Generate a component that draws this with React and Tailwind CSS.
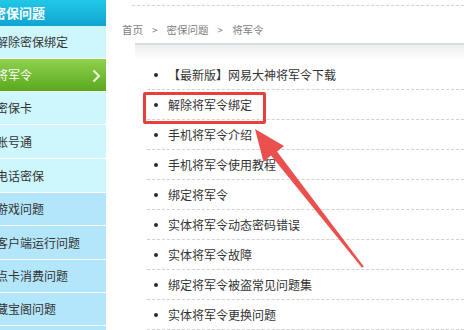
import React from "react";

const FONT = { fontFamily: '"Noto Sans CJK SC", "Noto Sans", sans-serif' };

const side = [
  { t: "解除密保绑定", c: "h-[33px] bg-[#cdf6fd]" },
  { t: "将军令", c: "h-[33px] bg-gradient-to-b from-[#8fd24c] to-[#5aa81c] text-white", active: true },
  { t: "密保卡", c: "h-[33px] bg-[#cdf6fd]" },
  { t: "账号通", c: "h-[34px] bg-[#cdf6fd]" },
  { t: "电话密保", c: "h-[34px] bg-[#cdf6fd]" },
  { t: "游戏问题", c: "h-[33px] bg-[#b3e6fa]" },
  { t: "客户端运行问题", c: "h-[34px] bg-[#b3e6fa]" },
  { t: "点卡消费问题", c: "h-[33px] bg-[#b3e6fa]" },
  { t: "藏宝阁问题", c: "h-[33px] bg-[#b3e6fa]" },
];

const items = [
  "【最新版】网易大神将军令下载",
  "解除将军令绑定",
  "手机将军令介绍",
  "手机将军令使用教程",
  "绑定将军令",
  "实体将军令动态密码错误",
  "实体将军令故障",
  "绑定将军令被盗常见问题集",
  "实体将军令更换问题",
];

export default function App() {
  return (
    <div className="relative flex h-[330px] w-[464px] overflow-hidden bg-white" style={FONT}>
      {/* Sidebar */}
      <div className="flex w-[106px] shrink-0 flex-col overflow-hidden bg-[#b3e6fa]">
        <div className="flex h-[26px] shrink-0 items-center bg-gradient-to-b from-[#22c8e6] to-[#0fa4d2]">
          <span className="ml-[-7px] whitespace-nowrap text-[13px] font-bold text-white">密保问题</span>
        </div>
        {side.map((s) => (
          <div
            key={s.t}
            className={`relative flex shrink-0 items-center border-b border-white ${s.c}`}
          >
            <span className={`ml-[-4px] whitespace-nowrap text-[12px] ${s.active ? "text-white" : "text-[#333333]"}`}>
              {s.t}
            </span>
            {s.active && (
              <svg className="absolute right-[5px] top-[10px]" width="9" height="14" viewBox="0 0 9 14">
                <polyline points="1.5,1.5 7,7 1.5,12.5" fill="none" stroke="#effbdc" strokeWidth="2" />
              </svg>
            )}
          </div>
        ))}
        <div className="flex-1 bg-[#b3e6fa]" />
      </div>

      {/* Content */}
      <div className="flex flex-1 flex-col">
        <div className="ml-[26px] mt-[5px] border-t border-dashed border-[#d4d4d4]" />
        <div className="flex h-[40px] items-center gap-[9px] pl-[16px] pt-[10px] text-[10.5px] text-[#808080]">
          <span>首页</span>
          <span className="text-[10px]">&gt;</span>
          <span>密保问题</span>
          <span className="text-[10px]">&gt;</span>
          <span>将军令</span>
        </div>
        <div className="ml-[29px] border-t-2 border-[#d9dde0]" />
        <div className="ml-[29px] h-[16px] bg-gradient-to-b from-[#eceff1] to-white" />
        <ul className="ml-[41px] flex flex-col">
          {items.map((t) => (
            <li
              key={t}
              className="flex h-[30px] shrink-0 items-center border-b border-dashed border-[#d2d2d2]"
            >
              <span className="ml-[7px] mr-[10px] h-[4px] w-[4px] rounded-full bg-[#2b2b33]" />
              <span className="whitespace-nowrap text-[12px] text-[#333333]">{t}</span>
            </li>
          ))}
        </ul>
      </div>

      {/* Red highlight box */}
      <div className="absolute left-[143px] top-[92px] h-[32px] w-[123px] rounded-[2px] border-[3px] border-[#e5403c]" />

      {/* Arrow */}
      <svg className="absolute left-0 top-0" width="464" height="330" viewBox="0 0 464 330">
        <polygon
          points="255,129 284,146 277,151.5 363.8,266.4 362,267.8 271,155.5 263.5,162"
          fill="#e8413f"
          fillOpacity="0.92"
        />
      </svg>
    </div>
  );
}
